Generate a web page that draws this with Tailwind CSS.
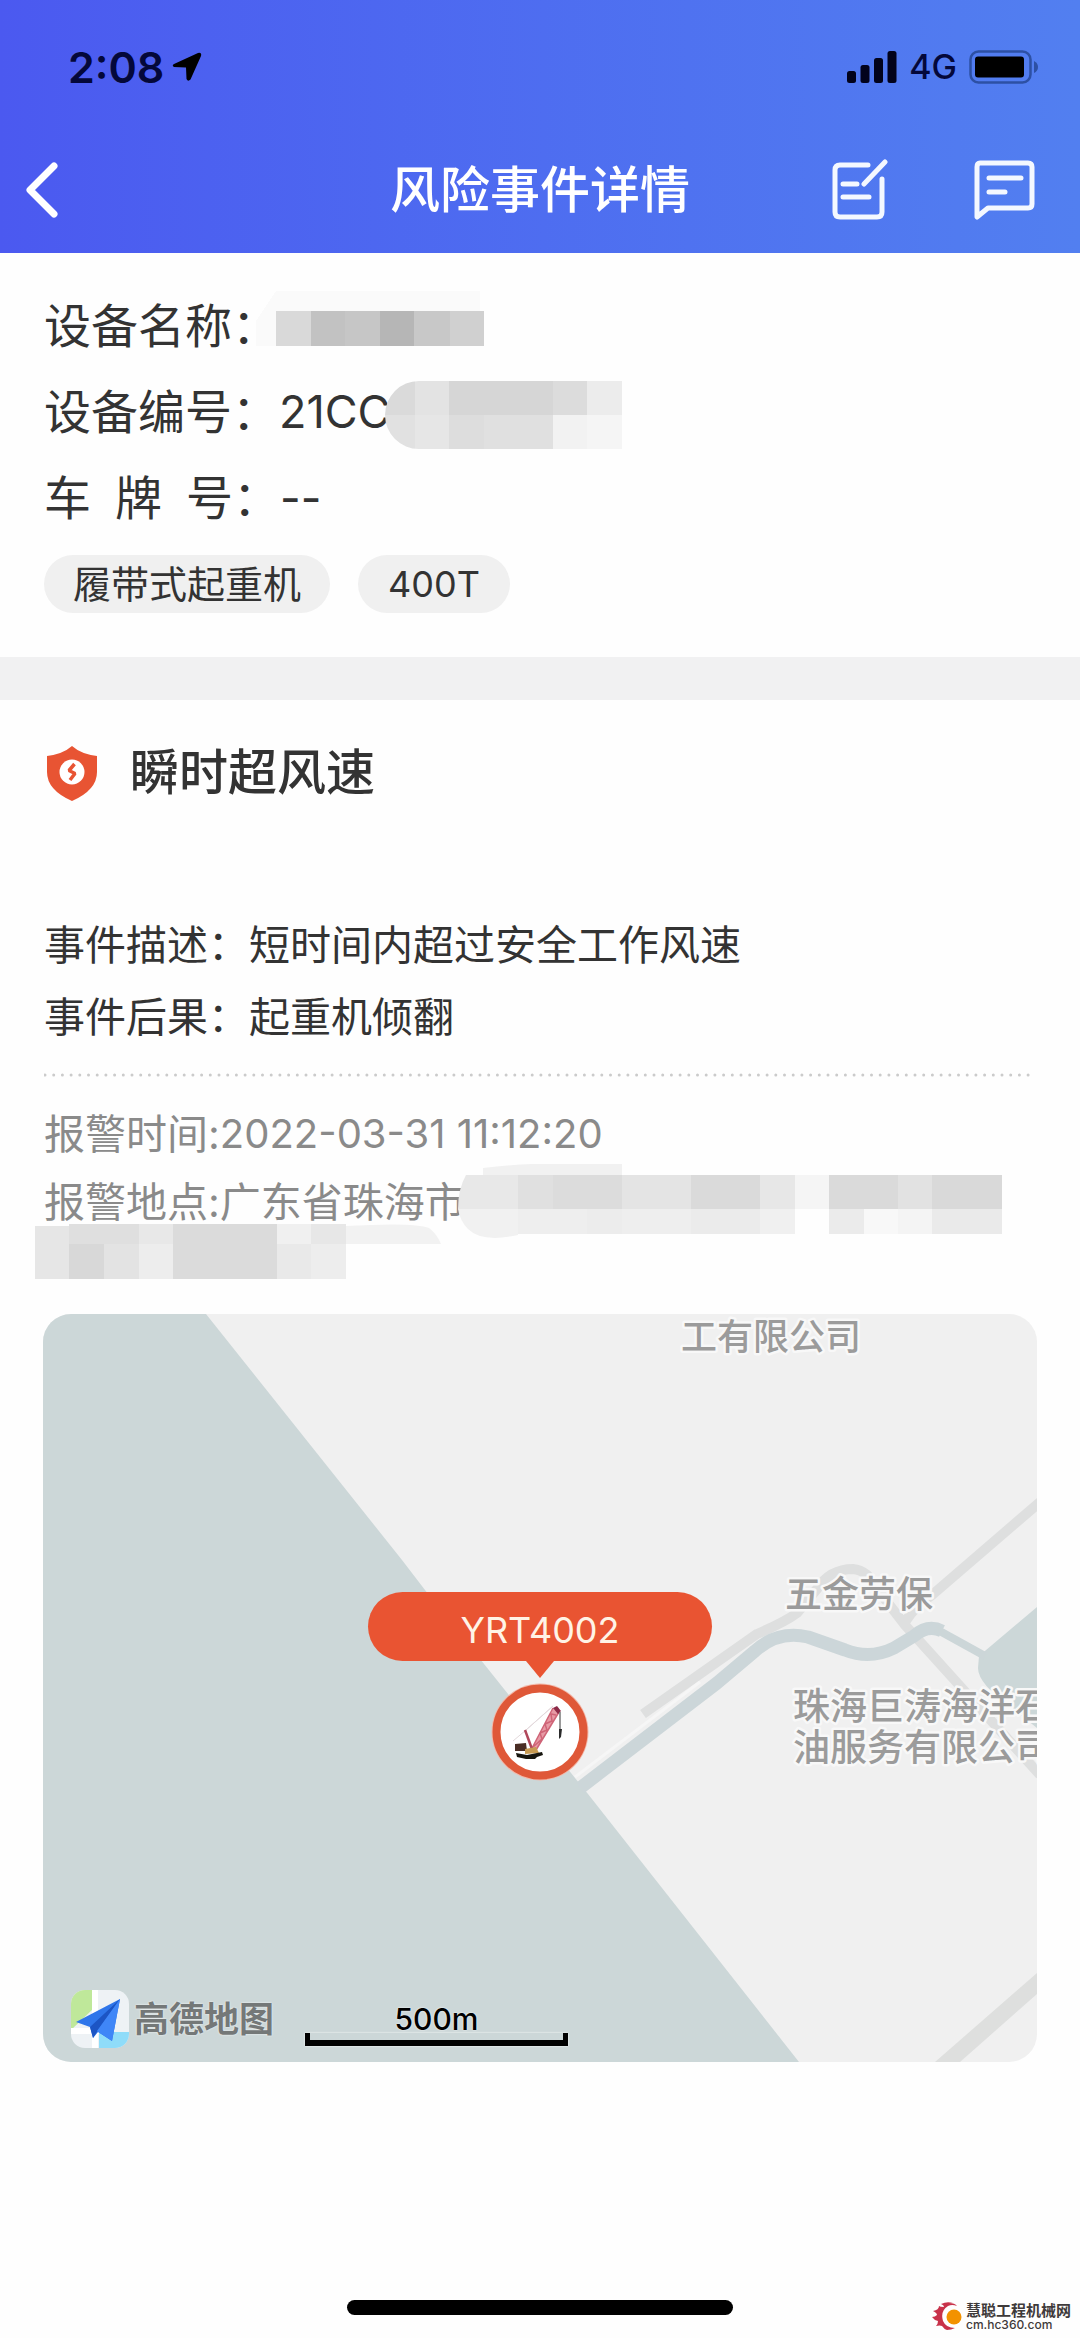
<!DOCTYPE html>
<html lang="zh-CN">
<head>
<meta charset="utf-8">
<meta name="viewport" content="width=device-width, initial-scale=1">
<title>风险事件详情</title>
<script src="https://cdn.jsdelivr.net/npm/@tailwindcss/browser@4"></script>
</head>
<body class="flex min-h-screen flex-col bg-[#fefefe] font-[Inter,'Noto_Sans_CJK_SC',sans-serif] text-[#333333]">

<header class="bg-linear-to-r from-[#4b59f0] to-[#527ff0] text-white">
  <!-- status bar -->
  <div class="flex h-[126px] items-center justify-between pt-2 pr-[41px] pl-[68px] text-[#04083a]">
    <div class="flex items-center gap-2">
      <span class="text-[43px] leading-none font-semibold">2:08</span>
      <svg class="h-[30px] w-[30px]" viewBox="0 0 30 30" fill="#000"><path d="M26 1 2 12q-2.500 1.500 0 3L14 15.500 14.500 27q1.500 3 4 0.500L29 4Q30 0 26 1Z"/></svg>
    </div>
    <div class="flex items-center gap-3">
      <svg class="h-[32px] w-[50px]" viewBox="0 0 50 32" fill="#02031c"><rect y="20" width="9" height="12" rx="2.500"/><rect x="13.500" y="14" width="9" height="18" rx="2.500"/><rect x="27" y="7" width="9" height="25" rx="2.500"/><rect x="40.500" y="0" width="9" height="32" rx="2.500"/></svg>
      <span class="text-[34px] leading-none font-medium">4G</span>
      <svg class="h-[34px] w-[70px]" viewBox="0 0 70 34"><rect x="1.500" y="1.500" width="60" height="31" rx="8" fill="none" stroke="#2d50a4" stroke-width="2.500"/><rect x="6" y="6.500" width="49" height="21" rx="3" fill="#000"/><path d="M65 11q4 2 4 6t-4 6Z" fill="#2d50a4"/></svg>
    </div>
  </div>
  <!-- navigation bar -->
  <div class="grid h-[127px] grid-cols-[1fr_auto_1fr] items-center pt-px">
    <button type="button" aria-label="返回" class="ml-[22px] justify-self-start">
      <svg class="h-[60px] w-[40px]" viewBox="0 0 40 60" fill="none" stroke="#fff" stroke-width="7" stroke-linecap="round" stroke-linejoin="round"><path d="M32 6 8 30 32 54"/></svg>
    </button>
    <h1 class="text-[50px] leading-none font-medium whitespace-nowrap">风险事件详情</h1>
    <div class="mr-[44px] flex items-center gap-[84px] justify-self-end">
      <button type="button" aria-label="填写记录">
        <svg class="h-[64px] w-[58px]" viewBox="0 0 58 64" fill="none" stroke="#f4f8ff" stroke-width="5" stroke-linecap="round" stroke-linejoin="round"><path d="M38 7H10q-5 0-5 5v42q0 5 5 5h37q5 0 5-5V21M13 26h14M13 39h26M34 26 55 4"/></svg>
      </button>
      <button type="button" aria-label="消息">
        <svg class="h-[64px] w-[64px]" viewBox="0 0 64 64" fill="none" stroke="#f4f8ff" stroke-width="5" stroke-linecap="round" stroke-linejoin="round"><path d="M8 5h48q4 0 4 4v37q0 4-4 4H16L5 59V9q0-4 3-4ZM17 20h32M17 34h16"/></svg>
      </button>
    </div>
  </div>
</header>

<main class="flex flex-col">
  <section class="px-11 pt-[30px] pb-11">
    <dl class="text-[47px] leading-[86px]">
      <div class="relative flex">
        <dt>设备名称：</dt>
        <dd>
          <svg class="absolute top-2 left-[212px] h-[56px] w-[230px]" viewBox="0 0 230 56" role="img" aria-label="已遮挡" shape-rendering="crispEdges"><path d="M20 0H224V20H230V20H20V55H0V30Z" fill="#fafafa"/><path fill="#d9d9d9" d="M20 20h35v35H20z"/><path fill="#c2c2c2" d="M55 20h34v35H55z"/><path fill="#c6c6c6" d="M89 20h35v35H89z"/><path fill="#b6b6b6" d="M124 20h34v35h-34z"/><path fill="#c8c8c8" d="M158 20h36v35h-36z"/><path fill="#d0d0d0" d="M194 20h34v35h-34z"/></svg>
        </dd>
      </div>
      <div class="relative flex">
        <dt>设备编号：</dt>
        <dd class="text-[45px]">21CC
          <svg class="absolute top-[12px] left-[341px] h-[68px] w-[237px] rounded-l-[34px]" viewBox="0 0 237 68" role="img" aria-label="已遮挡"><g shape-rendering="crispEdges"><path fill="#dadada" d="M0 0h30v34H0z"/><path fill="#e3e3e3" d="M30 0h34v34H30z"/><path fill="#d6d6d6" d="M64 0h104v34H64z"/><path fill="#dcdcdc" d="M168 0h34v34h-34z"/><path fill="#ececec" d="M202 0h35v34h-35z"/><path fill="#e1e1e1" d="M0 34h30v34H0z"/><path fill="#e6e6e6" d="M30 34h34v34H30z"/><path fill="#dddddd" d="M64 34h35v34H64z"/><path fill="#e0e0e0" d="M99 34h69v34H99z"/><path fill="#f2f2f2" d="M168 34h34v34h-34z"/><path fill="#f5f5f5" d="M202 34h35v34h-35z"/></g></svg>
        </dd>
      </div>
      <div class="flex">
        <dt class="flex gap-6"><span>车</span><span>牌</span><span>号：</span></dt>
        <dd class="text-[45px]">--</dd>
      </div>
    </dl>
    <ul class="mt-[14px] flex gap-7 text-[38px] leading-[58px]">
      <li class="rounded-full bg-[#f0f0f0] px-[29px]">履带式起重机</li>
      <li class="rounded-full bg-[#f0f0f0] px-[30px] text-[36px]">400T</li>
    </ul>
  </section>

  <div class="h-[43px] bg-[#f1f1f2]"></div>

  <section class="px-11 pt-[42px]">
    <div class="flex items-center gap-[30px]">
      <svg class="h-[60px] w-[56px]" viewBox="0 0 56 60"><path d="M28 3q9 8 25 10v16q0 18-25 29Q3 47 3 29V13q16-2 25-10Z" fill="#e85433"/><circle cx="28" cy="29" r="12.500" fill="#fff"/><path d="M30.500 21 25 27.500 31 30.500 26 37" fill="none" stroke="#e85433" stroke-width="3.500" stroke-linejoin="bevel"/></svg>
      <h2 class="text-[49px] leading-[62px] font-medium">瞬时超风速</h2>
    </div>
    <dl class="mt-[105px] text-[41px] leading-[72px]">
      <div class="flex"><dt>事件描述：</dt><dd>短时间内超过安全工作风速</dd></div>
      <div class="flex"><dt>事件后果：</dt><dd>起重机倾翻</dd></div>
    </dl>
    <svg class="mt-[20px] block h-1 w-full" role="separator"><line x1="1" y1="2" x2="99.900%" y2="2" stroke="#cbcbcb" stroke-width="3" stroke-linecap="round" stroke-dasharray="0 8.700"/></svg>
    <dl class="relative mt-[23px] text-[41px] leading-[68px] text-[#8a8a8a]">
      <div class="flex"><dt>报警时间:</dt><dd class="text-[40px]">2022-03-31 11:12:20</dd></div>
      <div class="flex"><dt>报警地点:</dt><dd>广东省珠海市</dd></div>
      <dd>
        <svg class="absolute top-[64px] -left-[9px] h-[116px] w-[967px]" viewBox="35 1164 967 116" role="img" aria-label="已遮挡">
          <path fill="#fefefe" d="M466 1176h36v58H480q-20-12-20-36z"/>
          <path fill="#f1f1f1" d="M483 1168q40-5 70-4h69v12H483z"/>
          <path fill="#e8e8e8" d="M466 1175h52v34h-60q0-20 8-34z"/>
          <g shape-rendering="crispEdges"><path fill="#e0e0e0" d="M518 1175h35v34h-35z"/><path fill="#dcdcdc" d="M553 1175h69v34h-69z"/><path fill="#e4e4e4" d="M622 1175h69v34h-69z"/><path fill="#dadada" d="M691 1175h69v34h-69z"/><path fill="#e7e7e7" d="M760 1175h35v34h-35z"/><path fill="#f5f5f5" d="M795 1175h34v34h-34z"/><path fill="#dadada" d="M829 1175h69v34h-69z"/><path fill="#e2e2e2" d="M898 1175h34v34h-34z"/><path fill="#d9d9d9" d="M932 1175h70v34h-70z"/>
          <path fill="#eeeeee" d="M518 1209h173v25H518z"/><path fill="#ececec" d="M587 1209h35v25h-35z"/><path fill="#ebebeb" d="M691 1209h69v25h-69z"/><path fill="#f0f0f0" d="M760 1209h35v25h-35z"/><path fill="#ebebeb" d="M829 1209h35v25h-35z"/><path fill="#f8f8f8" d="M864 1209h34v25h-34z"/><path fill="#f4f4f4" d="M898 1209h34v25h-34z"/><path fill="#eaeaea" d="M932 1209h70v25h-70z"/></g>
          <path fill="#f1f1f1" d="M458 1209h60v26q-36 8-50-6-8-8-10-20z"/>
          <path fill="#f2f2f2" d="M345 1226q70-4 84 2 8 6 12 16H345z"/>
          <g shape-rendering="crispEdges"><path fill="#e6e6e6" d="M35 1226h34v53H35z"/><path fill="#dfdfdf" d="M69 1224h70v20H69z"/><path fill="#d8d8d8" d="M69 1244h35v35H69z"/><path fill="#e3e3e3" d="M104 1244h35v35h-35z"/><path fill="#e8e8e8" d="M139 1224h34v20h-34z"/><path fill="#ededed" d="M139 1244h34v35h-34z"/><path fill="#dbdbdb" d="M173 1224h104v55H173z"/><path fill="#f0f0f0" d="M277 1224h34v20h-34z"/><path fill="#e9e9e9" d="M277 1244h34v35h-34z"/><path fill="#e7e7e7" d="M311 1224h35v20h-35z"/><path fill="#ededed" d="M311 1244h35v35h-35z"/></g>
        </svg>
      </dd>
    </dl>
  </section>

  <!-- map card -->
  <section aria-label="报警位置地图" class="relative mx-[43px] mt-[78px] h-[748px] overflow-hidden rounded-[28px] bg-[#f0f0f0]">
    <svg class="h-full w-full" viewBox="43 1314 994 748" preserveAspectRatio="xMidYMid slice">
      <path fill="#ccd7d8" d="M43 1314H206L402 1560 425 1590 575 1778 588 1794 799 2062H43Z"/>
      <path fill="#ccd7d8" d="M979 1656 1037 1607V1728L1012 1708Q978 1684 978 1668Z"/>
      <path fill="none" stroke="#dedfdf" stroke-width="10" d="M643 1714 757 1634 Q785 1622 797 1613 L817 1589Q830 1569 853 1569 868 1570 878 1590L905 1625 960 1686 1040 1775M905 1622 Q915 1606 932 1595L1040 1502"/>
      <path fill="#dedfde" d="M935 2062 1037 1973V1994L960 2062Z"/>
      <path fill="none" stroke="#f6f6f6" stroke-width="3" d="M575 1777 700 1682"/>
      <path fill="none" stroke="#ccd6d9" stroke-width="13" stroke-linejoin="round" d="M580 1788 717 1683 755 1651Q778 1630 808 1637L845 1650Q870 1660 894 1648L914 1636Q928 1624 942 1631"/>
      <path fill="none" stroke="#ccd6d8" stroke-width="8" d="M936 1629 985 1656"/>
      <g fill="#9b9b9b" stroke="#f8f8f8" stroke-width="5" stroke-linejoin="round" paint-order="stroke" font-family="'Noto Sans CJK SC', sans-serif" font-size="37" font-weight="500">
        <text x="681" y="1350" font-size="36">工有限公司</text>
        <text x="785" y="1608">五金劳保</text>
        <text x="793" y="1720">珠海巨涛海洋石<tspan x="793" dy="41">油服务有限公司</tspan></text>
      </g>
    </svg>

    <!-- device marker -->
    <button type="button" class="absolute top-[278px] left-1/2 flex w-[344px] -translate-x-1/2 flex-col items-center">
      <span class="w-full rounded-full bg-[#e95432] pt-2 text-center text-[36px] leading-[61px] text-[#fff3e6]">YRT4002</span>
      <svg class="h-[17px] w-[28px]" viewBox="0 0 28 17"><path d="M0 0H28L14 17Z" fill="#e95432"/></svg>
      <svg class="mt-[5px] h-[98px] w-[98px]" viewBox="0 0 98 98">
        <circle cx="49" cy="49" r="48.500" fill="#f3b7a8"/>
        <circle cx="49" cy="49" r="43.500" fill="#fff" stroke="#df5838" stroke-width="8"/>
        <path d="M22 58 35 47 61 24M35 47 62 23" stroke="#e3d9dc" stroke-width="1" fill="none"/>
        <path d="M39 69 62 25 68 29 45 67Z" fill="#e79aa5"/>
        <path d="M39 69 62 25M45 67 68 29M42 64 51 56 49 50 56 47 54 41 61 38 60 31 65 32" stroke="#cf6477" stroke-width="1.500" fill="none"/>
        <path d="M62 25 66 23 70 28 67 31Z" fill="#8c2b48"/>
        <path d="M34 47 41 66" stroke="#b0475a" stroke-width="2.500"/>
        <path d="M69 29V50" stroke="#777" stroke-width="1.500"/><path d="M68 46h3l-1 8-2 2Z" fill="#2b2b2b"/>
        <path d="M24 61 35 60 36 68 24 68Z" fill="#4a2e25"/>
        <path d="M34 66 45 64 48 70 34 71Z" fill="#c79b52"/>
        <path d="M25 70 36 72 51 69 52 72 46 74 44 76 35 76 26 74Z" fill="#17160f"/>
      </svg>
    </button>

    <!-- map provider and scale -->
    <div class="absolute bottom-[14px] left-[28px] flex items-center gap-[5px]">
      <svg class="h-[58px] w-[58px]" viewBox="0 0 58 58"><clipPath id="tile"><rect width="58" height="58" rx="14"/></clipPath><g clip-path="url(#tile)"><path fill="#eef2f5" d="M0 0h58v58H0z"/><path fill="#bfe89a" d="M0 0h21v20L0 40Z"/><path fill="#fff" d="M21 0h6v58h-6zM0 38h28v6H0z"/><path fill="#8fdcf9" d="M28 42h30v16H28z"/><path fill="#2f76ea" d="M49 9 5 32 19 37 22 48 27 42 41 51Z"/><path fill="#1c55c4" d="M49 9 19 37 22 48 27 40Z"/><path fill="#3f86f7" d="M49 9 26 41 41 51Z"/></g></svg>
      <span class="text-[35px] leading-none font-bold text-[#747878] [text-shadow:0_0_2px_#fff]">高德地图</span>
    </div>
    <div class="absolute bottom-[16px] left-[262px] w-[263px]">
      <p class="text-center text-[30px] leading-[28px] font-medium text-black [text-shadow:0_0_2px_#fff]">500m</p>
      <div class="h-[13px] border-x-[5px] border-b-[6px] border-black [box-shadow:0_0_2px_#fff]"></div>
    </div>
  </section>
</main>

<footer class="relative mt-auto flex h-[38px] justify-center">
  <div class="h-[15px] w-[386px] rounded-full bg-black"></div>
  <a href="#" class="absolute right-[9px] bottom-[8px] flex items-center gap-[3px] text-[#3e3a3a]">
    <svg class="h-[28px] w-[31px]" viewBox="0 0 31 28"><path d="M21 1Q15-1 9 2q3 1 3 3-4 0-5-1 0 4-6 5 4 2 4 4-2 2-5 2 2 3 6 4 0 3-2 5 4-1 6 0 2 3 5 4 4 0 8-2-9 0-12-7-3-10 5-15 4-2 9 0-2-3-8-3Z" fill="#c8324a"/><circle cx="22" cy="15" r="7.500" fill="#f39200"/></svg>
    <span class="flex flex-col">
      <span class="text-[15px] leading-[17px] font-bold">慧聪工程机械网</span>
      <span class="text-[12px] leading-[11px] font-medium">cm.hc360.com</span>
    </span>
  </a>
</footer>
</body>
</html>
